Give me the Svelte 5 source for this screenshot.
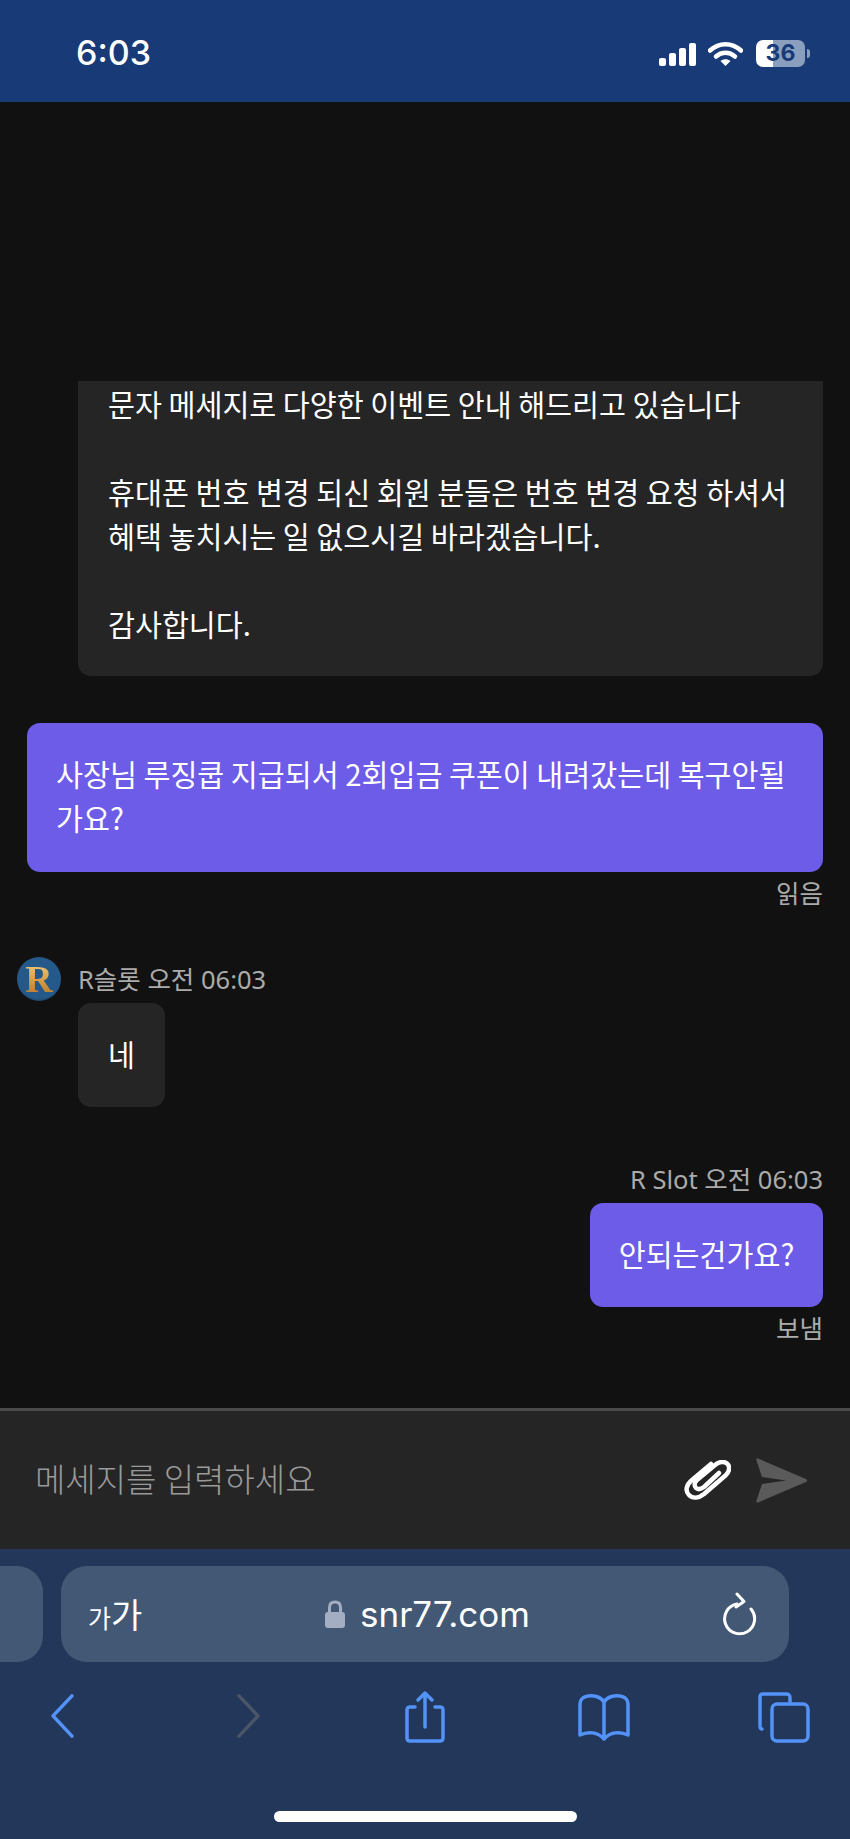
<script lang="ts">
  // one chat thread, rendered inside mobile safari chrome
  const notice = ['문자 메세지로 다양한 이벤트 안내 해드리고 있습니다', '', '휴대폰 번호 변경 되신 회원 분들은 번호 변경 요청 하셔서', '혜택 놓치시는 일 없으시길 바라겠습니다.', '', '감사합니다.'];
</script>

<div class="phone">
  <header class="status">
    <span class="time">6:03</span>
    <div class="status-icons">
      <svg class="signal" viewBox="0 0 37 23" width="37" height="23">
        <rect x="0" y="15" width="7" height="8" rx="2" />
        <rect x="10" y="10" width="7" height="13" rx="2" />
        <rect x="20" y="5" width="7" height="18" rx="2" />
        <rect x="30" y="0" width="7" height="23" rx="2" />
      </svg>
      <svg class="wifi" viewBox="0 0 35 25" width="35" height="25">
        <path d="M2 9.5C11 1 24 1 33 9.5" />
        <path d="M8 15.5C13.500 10.500 21.500 10.500 27 15.500" />
        <path class="fan" d="M12.500 20C15.500 17.500 19.500 17.500 22.500 20L17.500 25Z" />
      </svg>
      <div class="battery">
        <span class="level">36</span>
      </div>
      <span class="nub"></span>
    </div>
  </header>

  <main class="chat">
    <div class="bubble in notice">
      {#each notice as line}
        <p>{line || '\u00a0'}</p>
      {/each}
    </div>

    <div class="bubble out long">사장님 루징쿱 지급되서 2회입금 쿠폰이 내려갔는데 복구안될가요?</div>
    <div class="receipt">읽음</div>

    <div class="incoming">
      <div class="avatar"><span>R</span></div>
      <div class="incoming-body">
        <div class="meta">R슬롯 오전 06:03</div>
        <div class="bubble in short">네</div>
      </div>
    </div>

    <div class="meta right">R Slot 오전 06:03</div>
    <div class="bubble out ask">안되는건가요?</div>
    <div class="receipt">보냄</div>
  </main>

  <div class="composer">
    <span class="placeholder">메세지를 입력하세요</span>
    <svg class="clip" viewBox="0 0 47 40" width="47" height="40">
      <path d="M27 4L8 20C2 25 1 31 5 35C9 39 15 38 20 34L42 15C46 11 46 6 43 3.500C40 1 35 1.500 31 5L13 20C10 23 10 26 12 28C14 30 17 29 20 27L35 13" />
    </svg>
    <svg class="send" viewBox="0 0 51 45" width="51" height="45">
      <path d="M2 0.500L50 21C51.500 22 51.500 23 50 24L2 44.500C0.500 45 0 44 0.500 42.500L6 26L30 22.500L6 19L0.500 2.500C0 1 0.500 0 2 0.500Z" />
    </svg>
  </div>

  <footer class="browser">
    <div class="tabs-row">
      <div class="pill stub"></div>
      <div class="pill url">
        <span class="aa"><small>가</small>가</span>
        <div class="address">
          <svg viewBox="0 0 20 28" width="20" height="28">
            <path class="shackle" d="M4.500 13V7.500C4.500 3.800 6.800 2 10 2C13.200 2 15.500 3.800 15.500 7.500V13" />
            <rect x="0" y="12" width="20" height="16" rx="3" />
          </svg>
          <span>snr77.com</span>
        </div>
        <svg class="reload" viewBox="0 0 34 44" width="34" height="44">
          <path d="M14 12A15 15 0 1 0 28 17" />
          <path d="M14 2L21 9.500L13 15" />
        </svg>
      </div>
    </div>

    <nav class="toolbar">
      <svg viewBox="0 0 60 52" width="60" height="52"><path d="M39 5L20 26L39 47" transform="translate(1 0) scale(1 0.96)" /></svg>
      <svg class="off" viewBox="0 0 60 52" width="60" height="52"><path d="M21 5L40 26L21 47" transform="translate(5 0) scale(1 0.96)" /></svg>
      <svg viewBox="0 0 60 56" width="60" height="56">
        <path d="M22 18H17C15 18 14 19 14 21V49C14 51 15 52 17 52H47C49 52 50 51 50 49V21C50 19 49 18 47 18H42" />
        <path d="M32 38V4M25 11L32 4L39 11" />
      </svg>
      <svg viewBox="0 0 60 52" width="60" height="52">
        <path d="M30 11C27 6 20 4 14 5C8 6 6 9 6 13V44C14 40 24 41 30 48C36 41 46 40 54 44V13C54 9 52 6 46 5C40 4 33 6 30 11V46" />
      </svg>
      <svg viewBox="0 0 60 52" width="60" height="52">
        <path d="M8 38C6 38 6 37 6 35V6C6 4 7 3 9 3H32C35 3 36 4 36 7V12" />
        <rect x="18" y="13" width="36" height="37" rx="5" />
      </svg>
    </nav>

    <div class="home-bar"></div>
  </footer>
</div>

<style>
  :global(body) {
    margin: 0;
    background: #111;
  }

  .phone {
    width: 850px;
    height: 1839px;
    display: flex;
    flex-direction: column;
    overflow: hidden;
    font-family: "Noto Sans CJK KR", "Noto Sans", sans-serif;
    color: #fff;
  }

  .status {
    height: 102px;
    flex-shrink: 0;
    background: #183a76;
    display: flex;
    align-items: center;
    padding: 0 40px 0 76px;
    justify-content: space-between;
    box-sizing: border-box;
  }

  .time {
    font-family: Inter, "Liberation Sans", sans-serif;
    font-size: 34px;
    font-weight: 500;
    line-height: 1;
    margin-top: 4px;
  }

  .status-icons {
    display: flex;
    align-items: center;
    margin-top: 4px;
  }

  .signal {
    fill: #fff;
    margin-right: 12px;
    margin-top: 3px;
  }

  .wifi {
    margin-right: 13px;
  }

  .wifi path {
    fill: none;
    stroke: #fff;
    stroke-width: 4.500;
    stroke-linecap: round;
  }

  .wifi .fan {
    fill: #fff;
    stroke: none;
  }

  .battery {
    width: 49px;
    height: 27px;
    border-radius: 7px;
    background: linear-gradient(90deg, #fff 0 35%, #8a9fbd 35% 100%);
    display: flex;
    align-items: center;
    justify-content: center;
  }

  .level {
    font-family: Inter, "Liberation Sans", sans-serif;
    font-size: 23px;
    font-weight: 700;
    color: #183a76;
    line-height: 1;
  }

  .nub {
    width: 3px;
    height: 9px;
    margin-left: 2px;
    border-radius: 0 3px 3px 0;
    background: #8a9fbd;
  }

  .chat {
    flex: 1;
    background: #111;
    padding: 279px 27px 0 0;
    display: flex;
    flex-direction: column;
    align-items: flex-end;
  }

  .bubble {
    box-sizing: border-box;
    font-size: 29.300px;
    line-height: 44px;
    border-radius: 13px;
  }

  .bubble p {
    margin: 0;
  }

  .in {
    background: #252525;
    color: #fff;
  }

  .out {
    background: #6c5ce7;
    color: #fff;
  }

  .notice {
    width: 745px;
    height: 295px;
    border-radius: 0 0 13px 13px;
    padding: 0 30px;
    margin-bottom: 47px;
  }

  .long {
    width: 796px;
    height: 149px;
    padding: 28px 29px;
  }

  .receipt {
    font-size: 25.500px;
    line-height: 34px;
    color: #ababab;
    margin-top: 3px;
  }

  .incoming {
    display: flex;
    align-self: flex-start;
    margin-top: 48px;
    padding-left: 17px;
    gap: 17px;
  }

  .avatar {
    flex-shrink: 0;
    width: 44px;
    height: 44px;
    border-radius: 50%;
    background: radial-gradient(circle at 50% 40%, #24598a 0 68%, #0e1a22 100%);
    display: flex;
    align-items: center;
    justify-content: center;
  }

  .avatar span {
    font-family: "Liberation Serif", serif;
    font-weight: 700;
    font-size: 38px;
    line-height: 44px;
    background: linear-gradient(180deg, #f6d98e, #dca04a 50%, #a9701f);
    -webkit-background-clip: text;
    background-clip: text;
    color: transparent;
  }

  .meta {
    font-family: "Noto Sans", "Noto Sans CJK KR", sans-serif;
    font-size: 25.500px;
    line-height: 34px;
    color: #ababab;
    margin-top: 5px;
  }

  .short {
    width: 87px;
    height: 104px;
    margin-top: 7px;
    padding-bottom: 4px;
    display: flex;
    align-items: center;
    justify-content: center;
  }

  .meta.right {
    margin-top: 55px;
  }

  .ask {
    width: 233px;
    height: 104px;
    margin-top: 7px;
    padding-bottom: 4px;
    display: flex;
    align-items: center;
    justify-content: center;
  }

  .composer {
    height: 141px;
    flex-shrink: 0;
    box-sizing: border-box;
    border-top: 3px solid #4a4a4a;
    background: #252525;
    display: flex;
    align-items: center;
    padding: 0 43px 0 35px;
  }

  .placeholder {
    flex: 1;
    font-size: 33px;
    font-weight: 300;
    color: #9a9a9a;
    margin-bottom: 4px;
  }

  .clip {
    margin-right: 25px;
  }

  .clip path {
    fill: none;
    stroke: #fff;
    stroke-width: 4.500;
    stroke-linecap: round;
    stroke-linejoin: round;
  }

  .send {
    fill: #5a5a5a;
  }

  .browser {
    height: 290px;
    flex-shrink: 0;
    background: #22375a;
    padding-top: 17px;
    box-sizing: border-box;
    display: flex;
    flex-direction: column;
    position: relative;
  }

  .tabs-row {
    display: flex;
    gap: 18px;
  }

  .pill {
    height: 96px;
    background: #435874;
    border-radius: 26px;
    flex-shrink: 0;
  }

  .stub {
    width: 43px;
    border-radius: 0 26px 26px 0;
  }

  .url {
    width: 728px;
    display: flex;
    align-items: center;
    position: relative;
    box-sizing: border-box;
    padding: 0 32px 0 27px;
    justify-content: space-between;
  }

  .aa {
    font-size: 34px;
    line-height: 1;
  }

  .aa small {
    font-size: 25px;
  }

  .address {
    position: absolute;
    left: 264px;
    display: flex;
    align-items: center;
    gap: 15px;
    font-family: Inter, "Noto Sans", sans-serif;
    font-size: 35px;
    color: #fff;
  }

  .address svg {
    fill: #a3aec2;
  }

  .shackle {
    fill: none;
    stroke: #a3aec2;
    stroke-width: 3;
  }

  .reload path {
    fill: none;
    stroke: #fff;
    stroke-width: 3;
    stroke-linecap: round;
    stroke-linejoin: round;
  }

  .toolbar {
    display: flex;
    justify-content: space-between;
    align-items: center;
    padding: 0 36px 0 32px;
    margin-top: 27px;
    height: 56px;
  }

  .toolbar path,
  .toolbar rect {
    fill: none;
    stroke: #5392f9;
    stroke-width: 3.500;
    stroke-linecap: round;
    stroke-linejoin: round;
  }

  .toolbar .off path {
    stroke: #4a5668;
  }

  .home-bar {
    position: absolute;
    left: 274px;
    bottom: 17px;
    width: 303px;
    height: 11px;
    border-radius: 6px;
    background: #fff;
  }
</style>
